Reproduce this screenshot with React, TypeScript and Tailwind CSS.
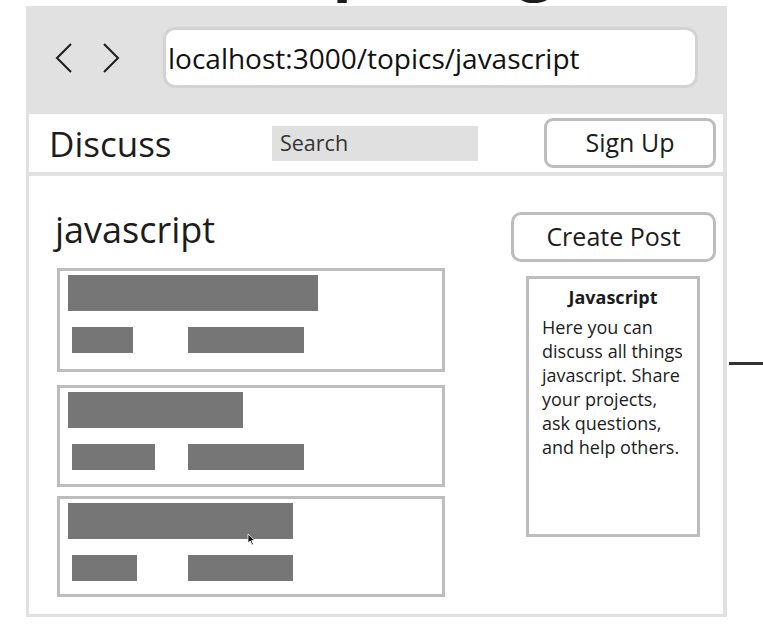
import React from 'react';

const posts = [
  { card: 'h-[104px]', title: 'w-[250px]', a: 'w-[61px]', b: 'w-[116px]', cursor: false },
  { card: 'h-[102px] mt-[13px]', title: 'w-[175px]', a: 'w-[83px]', b: 'w-[116px]', cursor: false },
  { card: 'h-[101px] mt-[9px]', title: 'w-[225px]', a: 'w-[65px]', b: 'w-[105px]', cursor: true },
];

function Chevron({ dir }: { dir: 'left' | 'right' }) {
  return (
    <svg width="20" height="32" viewBox="0 0 20 32" fill="none">
      <polyline
        points={dir === 'left' ? '17,2 3,16 17,30' : '3,2 17,16 3,30'}
        stroke="#1c1c1c"
        strokeWidth="2"
        strokeLinejoin="miter"
      />
    </svg>
  );
}

function Cursor() {
  return (
    <svg className="absolute left-[187px] top-[34px]" width="9" height="13" viewBox="0 0 9 13">
      <path d="M1 1 L1 10 L3.2 8 L5 12 L6.4 11.3 L4.7 7.5 L7.8 7.5 Z" fill="#111" stroke="#fff" strokeWidth="0.8" />
    </svg>
  );
}

function PostCard({ post }: { post: (typeof posts)[number] }) {
  return (
    <div className={`relative w-[388px] border-[3px] border-[#bdbdbd] bg-white ${post.card}`}>
      <div className="pl-[8px] pt-[4px]">
        <div className={`h-[36px] bg-[#767676] ${post.title}`} />
      </div>
      <div className="flex pl-[12px] mt-[16px]">
        <div className="w-[116px]">
          <div className={`h-[26px] bg-[#767676] ${post.a}`} />
        </div>
        <div className={`h-[26px] bg-[#767676] ${post.b}`} />
      </div>
      {post.cursor && <Cursor />}
    </div>
  );
}

export default function App() {
  return (
    <div className="w-[763px] h-[636px] bg-white overflow-hidden font-['Open_Sans',sans-serif] text-[#1c1c1c]">
      <div className="h-[6px] overflow-hidden">
        <div className="mt-[-68px] pl-[257px] text-[63px] font-bold leading-none whitespace-nowrap">Topic Page</div>
      </div>

      <div className="flex items-start">
        <div className="ml-[26px] w-[701px] bg-[#e1e1e1] pl-[3px] pr-[4px] pb-[3px]">
          {/* browser chrome */}
          <div className="h-[108px] flex items-start pt-[21px]">
            <div className="flex items-center gap-[27px] pl-[25px] h-[61px]">
              <Chevron dir="left" />
              <Chevron dir="right" />
            </div>
            <div className="ml-[42px] w-[535px] h-[61px] rounded-[12px] border-[3px] border-[#d3d3d3] bg-white flex items-center pl-[2px] text-[28px] text-[#111]">
              localhost:3000/topics/javascript
            </div>
          </div>

          {/* site nav */}
          <div className="h-[58px] bg-white flex items-center pl-[20px]">
            <span className="w-[223px] text-[35px] leading-none">Discuss</span>
            <div className="w-[206px] h-[35px] bg-[#e0e0e0] flex items-center pl-[8px] text-[21.5px] text-[#333]">Search</div>
            <button className="ml-auto mr-[7px] w-[172px] h-[50px] rounded-[9px] border-[3px] border-[#bdbdbd] bg-white text-[25px] flex items-center justify-center">
              Sign Up
            </button>
          </div>

          {/* page body */}
          <div className="mt-[4px] h-[438px] bg-white flex">
            <div className="ml-[26px] w-[390px] pt-[30px]">
              <h1 className="text-[36px] leading-[48px] font-normal">javascript</h1>
              <div className="mt-[14px] ml-[2px]">
                {posts.map((p, i) => (
                  <PostCard key={i} post={p} />
                ))}
              </div>
            </div>

            <div className="ml-auto mr-[7px] w-[205px] pt-[36px]">
              <button className="w-[205px] h-[50px] rounded-[10px] border-[3px] border-[#bdbdbd] bg-white text-[25px] flex items-center justify-center">
                Create Post
              </button>
              <div className="ml-[15px] mt-[14px] w-[174px] h-[261px] border-[3px] border-[#bdbdbd] pt-[6px]">
                <div className="text-center text-[18px] font-bold leading-[24px]">Javascript</div>
                <div className="mt-[6px] pl-[13px] text-[18px] leading-[24px]">
                  <div>Here you can</div>
                  <div>discuss all things</div>
                  <div>javascript. Share</div>
                  <div>your projects,</div>
                  <div>ask questions,</div>
                  <div>and help others.</div>
                </div>
              </div>
            </div>
          </div>
        </div>

        <div className="ml-[2px] mt-[356px] w-[34px] h-[3px] bg-[#333]" />
      </div>
    </div>
  );
}
